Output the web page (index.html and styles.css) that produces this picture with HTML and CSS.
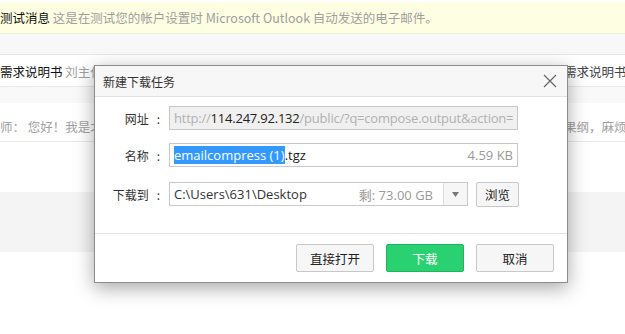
FILE: index.html
```html
<!DOCTYPE html>
<html lang="zh-CN">
<head>
    <meta charset="UTF-8">
    <title>新建下载任务</title>
    <link rel="stylesheet" href="styles.css">
</head>
<body>
    <div class="page">
        <div class="notice">
            <span class="notice-title">测试消息</span>
            <span class="notice-text">这是在测试您的帐户设置时 Microsoft Outlook 自动发送的电子邮件。</span>
        </div>
        <div class="toolbar"></div>
        <div class="mail-row row-one">
            <div class="cell-left"><span class="subject">需求说明书</span> <span class="muted">刘主任</span></div>
            <div class="cell-right"><span class="subject-soft">需求说明书</span></div>
        </div>
        <div class="strip"></div>
        <div class="mail-row row-two">
            <div class="cell-left muted">师： 您好！我是北</div>
            <div class="cell-right muted">果纲，麻烦</div>
        </div>
        <div class="blank"></div>
        <div class="gray-block"></div>
    </div>

    <div class="dialog">
        <div class="dialog-head">
            <span class="dialog-title">新建下载任务</span>
            <svg class="close" width="16" height="16" viewBox="0 0 16 16">
                <path d="M2 2L14 14M14 2L2 14" stroke="#666" stroke-width="1.2" fill="none"/>
            </svg>
        </div>
        <div class="dialog-body">
            <div class="form-row row-url">
                <label class="label">网址<span class="colon">:</span></label>
                <div class="field field-disabled">
                    <span class="url"><span class="url-dim">http://</span>114.247.92.132<span class="url-dim">/public/?q=compose.output&amp;action=</span></span>
                </div>
            </div>
            <div class="form-row row-name">
                <label class="label">名称<span class="colon">:</span></label>
                <div class="field">
                    <span class="name"><span class="selected">emailcompress (1)</span>.tgz</span>
                    <span class="hint">4.59 KB</span>
                </div>
            </div>
            <div class="form-row row-path">
                <label class="label">下载到<span class="colon">:</span></label>
                <div class="field field-path">
                    <span class="path">C:\Users\631\Desktop</span>
                    <span class="hint">剩: 73.00 GB</span>
                    <span class="drop"><svg width="7" height="5" viewBox="0 0 7 5"><path d="M0 0H7L3.5 5Z" fill="#777"/></svg></span>
                </div>
                <button class="btn btn-small">浏览</button>
            </div>
        </div>
        <div class="dialog-foot">
            <button class="btn">直接打开</button>
            <button class="btn btn-green">下载</button>
            <button class="btn">取消</button>
        </div>
    </div>
</body>
</html>
```

FILE: styles.css
```css
*{
    margin: 0;
    padding: 0;
    box-sizing: border-box;
}
body{
    width: 625px;
    height: 334px;
    overflow: hidden;
    background-color: #fff;
    font-family: "Noto Sans CJK SC", "Noto Sans", sans-serif;
    font-size: 12.5px;
    color: #222;
}
.notice{
    height: 32px;
    margin-top: 2px;
    padding-top: 6px;
    background-color: #fefee3;
    border-bottom: 1px solid #ececd8;
    white-space: nowrap;
}
.notice-title{
    color: #111;
}
.notice-text{
    color: #a0a0a0;
}
.toolbar{
    height: 21px;
    background-color: #f8f8f8;
    border-bottom: 1px solid #e6e6e6;
}
.mail-row{
    display: flex;
    white-space: nowrap;
    border-bottom: 1px solid #e8e8e8;
}
.row-one{
    height: 32px;
    padding-top: 7px;
}
.row-two{
    height: 39px;
    padding-top: 14px;
}
.cell-left{
    width: 564px;
    overflow: hidden;
}
.cell-right{
    flex: 1;
    overflow: hidden;
}
.subject{
    color: #111;
}
.subject-soft{
    color: #444;
}
.muted{
    color: #a0a0a0;
}
.strip{
    height: 16px;
    background-color: #f9f9f9;
}
.blank{
    height: 50px;
}
.gray-block{
    height: 60px;
    background-color: #f4f4f4;
}

/* 对话框 */
.dialog{
    position: absolute;
    left: 94px;
    top: 65px;
    width: 474px;
    height: 218px;
    background-color: #fff;
    border: 1px solid #8c8c8c;
    box-shadow: 0 5px 18px rgba(0,0,0,0.35);
    font-size: 12px;
    color: #333;
}
.dialog-head{
    height: 31px;
    display: flex;
    align-items: center;
    justify-content: space-between;
    padding: 0 9px 0 8px;
    background-color: #f7f7f7;
    border-bottom: 1px solid #e2e2e2;
}
.dialog-title{
    color: #333;
}
.dialog-body{
    height: 136px;
    padding-top: 9px;
}
.form-row{
    display: flex;
    align-items: center;
    height: 24px;
}
.row-name{
    margin-top: 13px;
}
.row-path{
    margin-top: 15px;
}
.label{
    width: 65px;
    margin-right: 9px;
    text-align: right;
    color: #333;
}
.colon{
    margin-left: 8px;
}
.field{
    width: 349px;
    height: 24px;
    border: 1px solid #c8c8c8;
    display: flex;
    align-items: center;
    justify-content: space-between;
    padding: 0 4px 0 4px;
    font-family: "Open Sans", "Noto Sans CJK SC", sans-serif;
    font-size: 13px;
    white-space: nowrap;
    overflow: hidden;
    color: #222;
}
.field-disabled{
    background-color: #f0f0f0;
}
.url{
    overflow: hidden;
    letter-spacing: -0.22px;
    color: #222;
}
.url-dim{
    color: #b0b0b0;
}
.selected{
    display: inline-block;
    background-color: #3399ff;
    color: #fff;
    line-height: 18px;
}
.hint{
    color: #999;
}
.field-path{
    width: 299px;
    padding-right: 0;
}
.path{
    flex: 1;
    color: #333;
}
.field-path .hint{
    margin-right: 10px;
}
.drop{
    width: 24px;
    height: 22px;
    display: flex;
    align-items: center;
    justify-content: center;
    background-color: #f6f6f6;
    border-left: 1px solid #dcdcdc;
}
.btn{
    width: 78px;
    height: 28px;
    border: 1px solid #c8c8c8;
    border-radius: 2px;
    background-color: #f6f6f6;
    font-family: "Noto Sans CJK SC", sans-serif;
    font-size: 12.5px;
    color: #222;
}
.btn-small{
    width: 43px;
    height: 25px;
    margin-left: 8px;
}
.btn-green{
    background-color: #2ad170;
    border-color: #21b45f;
    color: #fff;
}
.dialog-foot{
    display: flex;
    justify-content: flex-end;
    gap: 12px;
    padding: 10px 13px 0 0;
    border-top: 1px solid #e4e4e4;
}
```
